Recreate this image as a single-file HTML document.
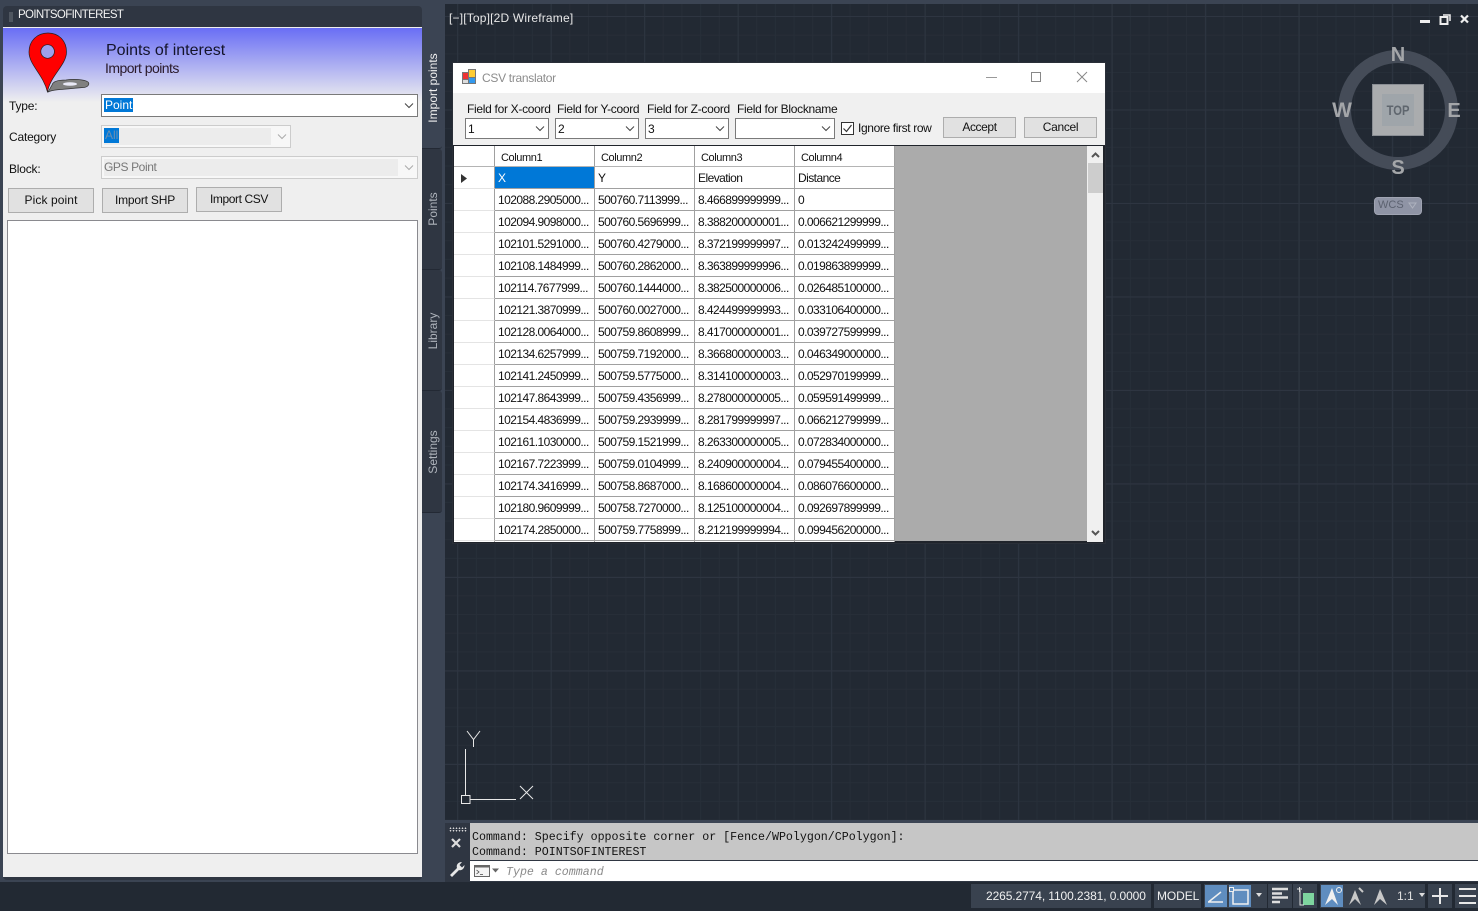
<!DOCTYPE html>
<html><head><meta charset="utf-8"><style>
html,body{margin:0;padding:0;width:1478px;height:911px;overflow:hidden;background:#3b4453;font:12px "Liberation Sans",sans-serif;color:#111}
div,span,table{position:absolute;box-sizing:border-box}
.t{white-space:nowrap;line-height:14px}
svg{position:absolute;overflow:visible}
#vp{left:445px;top:4px;width:1033px;height:816px;background-color:#222933;
background-image:linear-gradient(90deg,#2e3541 1px,transparent 1px),linear-gradient(#2e3541 1px,transparent 1px),linear-gradient(90deg,#272e38 1px,transparent 1px),linear-gradient(#272e38 1px,transparent 1px);
background-size:93.5px 93.5px,93.5px 93.5px,18.7px 18.7px,18.7px 18.7px;background-position:12.2px 12px,0 12px,12.2px 12px,0 12px}
.tab{left:422px;width:20px;background:#2f3642;border-radius:0 3px 3px 0;border-bottom:1px solid #232934}
.vt{color:#aeb3bb;transform:rotate(-90deg);transform-origin:center;white-space:nowrap;width:100px;text-align:center;left:-39px;line-height:14px}
.btn{background:#e1e1e1;border:1px solid #adadad;text-align:center;color:#111}
.cb{background:#fff;border:1px solid #7a7a7a;height:21px;top:118px}
.cmp{color:#a4a6a9;font:bold 20px "Liberation Sans",sans-serif;line-height:22px;width:30px;text-align:center}
.s{top:884px;height:24px;background:#39424f}
.b{top:885px;height:22px;background:#5f8dbf}
.f{letter-spacing:-.3px}
#g{left:0;top:0;width:441px;border-collapse:separate;border-spacing:0;table-layout:fixed;font-size:12px;letter-spacing:-.55px;position:absolute}
#g td{height:22px;padding:0 0 0 3px;border-right:1px solid #a0a0a0;border-bottom:1px solid #a0a0a0;white-space:nowrap;overflow:hidden;background:#fff;color:#111;box-sizing:border-box;line-height:14px}
#g tr.h td{height:21px;padding:3px 0 0 6px;font-size:11px;letter-spacing:-.4px;border-bottom-color:#b4b4b4}
#g td.r{border-right:1px solid #a0a0a0;border-bottom:1px solid #e4e4e4;padding:0;position:relative}
#g td.sel{background:#0078d7;color:#fff}
</style></head><body>
<div id="vp"></div>
<div style="left:0;top:882px;width:1478px;height:29px;background:#222933"></div>

<!-- left palette -->
<div style="left:3px;top:6px;width:419px;height:874px;background:#2f3642;border-radius:4px"></div>
<div style="left:9px;top:12px;width:4px;height:10px;background-image:radial-gradient(#b0b4ba .6px,transparent .7px);background-size:2px 2px"></div>
<div class="t" style="left:18px;top:8px;color:#f2f2f2;font-size:11.5px;letter-spacing:-.65px">POINTSOFINTEREST</div>
<div style="left:3px;top:27px;width:419px;height:850px;background:#efefef"></div>
<div style="left:3px;top:28px;width:419px;height:74px;background:linear-gradient(#696ef5,#efefef)"></div>
<svg style="left:0;top:0" width="100" height="100">
<path d="M48 92L52 85C53 81 60 80 66 80C72 79 84 79 88 82C90 84 88 87 84 87.500C76 88 68 89 60 89.500C56 90 52 90 48 92Z" fill="#808080" stroke="#333" stroke-width=".7"/>
<ellipse cx="70" cy="84" rx="7" ry="1.800" fill="#e8e8f5"/>
<path d="M48 33C37 33 29 41 29 52C29 65 43 74 47.500 92C50 76 66.500 65 66.500 52C66.500 41 59 33 48 33Z" fill="#f00" stroke="#222" stroke-width=".7"/>
<circle cx="47.600" cy="51.500" r="6.800" fill="#9fa0ea" stroke="#222" stroke-width=".7"/>
</svg>
<div class="t" style="left:106px;top:41px;font-size:16px;line-height:19px;color:#14142a">Points of interest</div>
<div class="t" style="left:105px;top:60px;font-size:14px;line-height:16px;color:#2a1a2a;letter-spacing:-.55px">Import points</div>
<div class="t" style="left:9px;top:99px;letter-spacing:-.2px">Type:</div>
<div style="left:101px;top:94px;width:317px;height:23px;background:#fff;border:1px solid #7a7a7a"></div>
<div class="t" style="left:104px;top:98px;width:29px;background:#0078d7;color:#fff;padding-left:1px">Point</div>
<svg style="left:404px;top:102px" width="12" height="8"><path d="M1 1.500L5 5.500L9 1.500" fill="none" stroke="#444"/></svg>
<div class="t" style="left:9px;top:130px;letter-spacing:-.2px">Category</div>
<div style="left:101px;top:125px;width:190px;height:23px;background:#f7f7f7;border:1px solid #ccc"></div>
<div style="left:104px;top:128px;width:167px;height:17px;background:#ececec"></div>
<div class="t" style="left:104px;top:128px;width:15px;height:15px;background:#0078d7;color:#6d8fb0;padding-left:1px">All</div>
<svg style="left:277px;top:133px" width="12" height="8"><path d="M1 1.500L5 5.500L9 1.500" fill="none" stroke="#aaa"/></svg>
<div class="t" style="left:9px;top:162px;letter-spacing:-.2px">Block:</div>
<div style="left:101px;top:156px;width:317px;height:23px;background:#f7f7f7;border:1px solid #ccc"></div>
<div style="left:104px;top:159px;width:294px;height:17px;background:#ececec"></div>
<div class="t" style="left:104px;top:160px;color:#777;letter-spacing:-.4px">GPS Point</div>
<svg style="left:404px;top:164px" width="12" height="8"><path d="M1 1.500L5 5.500L9 1.500" fill="none" stroke="#aaa"/></svg>
<div class="btn t" style="left:8px;top:188px;width:86px;height:25px;line-height:23px;letter-spacing:.1px">Pick point</div>
<div class="btn t" style="left:102px;top:188px;width:86px;height:25px;line-height:23px;letter-spacing:-.2px">Import SHP</div>
<div class="btn t" style="left:196px;top:187px;width:86px;height:25px;line-height:23px;letter-spacing:-.4px">Import CSV</div>
<div style="left:7px;top:220px;width:411px;height:634px;background:#fff;border:1px solid #8a8a8f"></div>

<!-- tabs -->
<div class="tab" style="top:28px;height:121px;background:#3b4453"><div class="vt" style="top:53px;color:#f0f0f0">Import points</div></div>
<div class="tab" style="top:149px;height:121px"><div class="vt" style="top:53px">Points</div></div>
<div class="tab" style="top:270px;height:121px"><div class="vt" style="top:54px">Library</div></div>
<div class="tab" style="top:391px;height:122px"><div class="vt" style="top:54px">Settings</div></div>

<!-- viewport overlays -->
<div class="t" style="left:449px;top:11px;color:#e8e8e8;letter-spacing:.18px">[−][Top][2D Wireframe]</div>
<svg style="left:1415px;top:12px" width="60" height="14">
<rect x="5" y="8" width="10" height="3" fill="#eee"/>
<rect x="25.500" y="5" width="7" height="7" fill="none" stroke="#eee" stroke-width="2"/>
<path d="M28 3H35V9" fill="none" stroke="#eee" stroke-width="1.500"/>
<path d="M46 3.500L53 10.500M53 3.500L46 10.500" stroke="#eee" stroke-width="2.200"/>
</svg>
<svg style="left:1330px;top:42px" width="136" height="136"><circle cx="68" cy="68" r="53.500" fill="none" stroke="#454c58" stroke-width="13"/></svg>
<div style="left:1372px;top:84px;width:52px;height:52px;background:#aaacae;border:1px solid #8a8e94"></div>
<div style="left:1382px;top:94px;width:32px;height:32px;background:#9fa5aa"></div>
<div class="t" style="left:1382px;top:102px;width:32px;text-align:center;font-weight:bold;font-size:14px;color:#5f666e;transform:scaleX(.8);line-height:16px">TOP</div>
<div class="cmp" style="left:1383px;top:44px">N</div>
<div class="cmp" style="left:1327px;top:100px;font-size:21px">W</div>
<div class="cmp" style="left:1439px;top:100px">E</div>
<div class="cmp" style="left:1383px;top:157px">S</div>
<div style="left:1374px;top:197px;width:48px;height:18px;background:#8f94a5;border:1px solid #a0a4b2;border-radius:4px"></div>
<div class="t" style="left:1378px;top:198px;color:#5c6270;font-size:11px">WCS</div>
<svg style="left:1408px;top:202px" width="10" height="8"><path d="M1 1H8L4.500 6Z" fill="none" stroke="#aeb2be"/></svg>

<svg style="left:455px;top:725px" width="80" height="85">
<path d="M10.500 24V70M15 74.500H61" stroke="#e8e8e8" fill="none"/>
<rect x="6.500" y="70.500" width="8.500" height="8" fill="none" stroke="#e8e8e8"/>
<path d="M12 6L18.500 14.500L25 6M18.500 14.500V22" stroke="#e8e8e8" fill="none"/>
<path d="M65 61L78 74M78 61L65 74" stroke="#e8e8e8" fill="none"/>
</svg>

<!-- dialog -->
<div style="left:453px;top:63px;width:652px;height:480px;background:#f0f0f0;box-shadow:0 0 0 1px #2a2f38"></div>
<div style="left:453px;top:63px;width:652px;height:30px;background:#fff"></div>
<svg style="left:462px;top:69px" width="16" height="16">
<rect x="0.500" y="3.500" width="6" height="7" fill="#e33" stroke="#777"/><rect x="6.500" y="0.500" width="7" height="8" fill="#fc3" stroke="#777"/><rect x="6.500" y="8.500" width="7" height="6" fill="#39e" stroke="#777"/><rect x="0.500" y="10.500" width="6" height="4" fill="#ddd" stroke="#777"/>
</svg>
<div class="t f" style="left:482px;top:71px;color:#8c8c8c">CSV translator</div>
<svg style="left:980px;top:68px" width="115" height="18">
<path d="M6 9.500H17" stroke="#999"/><rect x="51.500" y="4.500" width="9" height="9" fill="none" stroke="#888"/><path d="M97 4L107 14M107 4L97 14" stroke="#888"/>
</svg>
<div class="t f" style="left:467px;top:102px">Field for X-coord</div>
<div class="t f" style="left:557px;top:102px">Field for Y-coord</div>
<div class="t f" style="left:647px;top:102px">Field for Z-coord</div>
<div class="t f" style="left:737px;top:102px">Field for Blockname</div>
<div class="cb t" style="left:465px;width:84px;padding:3px 0 0 2px">1</div>
<div class="cb t" style="left:555px;width:84px;padding:3px 0 0 2px">2</div>
<div class="cb t" style="left:645px;width:84px;padding:3px 0 0 2px">3</div>
<div class="cb" style="left:735px;width:100px"></div>
<svg style="left:535px;top:125px" width="300" height="8" fill="none" stroke="#444"><path d="M1 1.500L5 5.500L9 1.500M91 1.500L95 5.500L99 1.500M181 1.500L185 5.500L189 1.500M287 1.500L291 5.500L295 1.500"/></svg>
<svg style="left:841px;top:122px" width="14" height="13"><rect x="0.500" y="0.500" width="12" height="12" fill="#fff" stroke="#333"/><path d="M2.500 6.500L5.500 9.500L10.500 3" fill="none" stroke="#333" stroke-width="1.200"/></svg>
<div class="t" style="left:858px;top:121px;letter-spacing:-.37px">Ignore first row</div>
<div class="btn t" style="left:943px;top:117px;width:73px;height:21px;line-height:19px;letter-spacing:-.4px">Accept</div>
<div class="btn t" style="left:1024px;top:117px;width:73px;height:21px;line-height:19px;letter-spacing:-.3px">Cancel</div>

<div style="left:453px;top:145px;width:652px;height:398px;background:#ababab;border:solid #20242b;border-width:1px 2px 2px 1px"></div>
<div style="left:454px;top:146px;width:441px;height:396px;overflow:hidden">
<table id="g">
<colgroup><col style="width:41px"><col style="width:100px"><col style="width:100px"><col style="width:100px"><col style="width:100px"></colgroup>
<tr class="h"><td class="r" style="border-bottom-color:#b4b4b4"></td><td>Column1</td><td>Column2</td><td>Column3</td><td>Column4</td></tr>
<tr><td class="r"><svg style="left:7px;top:7px" width="6" height="9"><path d="M0 0L6 4.500L0 9Z" fill="#333"/></svg></td><td class="sel">X</td><td>Y</td><td>Elevation</td><td>Distance</td></tr>
<tr><td class="r"></td><td>102088.2905000...</td><td>500760.7113999...</td><td>8.466899999999...</td><td>0</td></tr>
<tr><td class="r"></td><td>102094.9098000...</td><td>500760.5696999...</td><td>8.388200000001...</td><td>0.006621299999...</td></tr>
<tr><td class="r"></td><td>102101.5291000...</td><td>500760.4279000...</td><td>8.372199999997...</td><td>0.013242499999...</td></tr>
<tr><td class="r"></td><td>102108.1484999...</td><td>500760.2862000...</td><td>8.363899999996...</td><td>0.019863899999...</td></tr>
<tr><td class="r"></td><td>102114.7677999...</td><td>500760.1444000...</td><td>8.382500000006...</td><td>0.026485100000...</td></tr>
<tr><td class="r"></td><td>102121.3870999...</td><td>500760.0027000...</td><td>8.424499999993...</td><td>0.033106400000...</td></tr>
<tr><td class="r"></td><td>102128.0064000...</td><td>500759.8608999...</td><td>8.417000000001...</td><td>0.039727599999...</td></tr>
<tr><td class="r"></td><td>102134.6257999...</td><td>500759.7192000...</td><td>8.366800000003...</td><td>0.046349000000...</td></tr>
<tr><td class="r"></td><td>102141.2450999...</td><td>500759.5775000...</td><td>8.314100000003...</td><td>0.052970199999...</td></tr>
<tr><td class="r"></td><td>102147.8643999...</td><td>500759.4356999...</td><td>8.278000000005...</td><td>0.059591499999...</td></tr>
<tr><td class="r"></td><td>102154.4836999...</td><td>500759.2939999...</td><td>8.281799999997...</td><td>0.066212799999...</td></tr>
<tr><td class="r"></td><td>102161.1030000...</td><td>500759.1521999...</td><td>8.263300000005...</td><td>0.072834000000...</td></tr>
<tr><td class="r"></td><td>102167.7223999...</td><td>500759.0104999...</td><td>8.240900000004...</td><td>0.079455400000...</td></tr>
<tr><td class="r"></td><td>102174.3416999...</td><td>500758.8687000...</td><td>8.168600000004...</td><td>0.086076600000...</td></tr>
<tr><td class="r"></td><td>102180.9609999...</td><td>500758.7270000...</td><td>8.125100000004...</td><td>0.092697899999...</td></tr>
<tr><td class="r"></td><td>102174.2850000...</td><td>500759.7758999...</td><td>8.212199999994...</td><td>0.099456200000...</td></tr>
<tr><td class="r"></td><td></td><td></td><td></td><td></td></tr>
</table>
</div>
<div style="left:1087px;top:146px;width:16px;height:396px;background:#f0f0f0"></div>
<div style="left:1088px;top:163px;width:15px;height:30px;background:#cdcdcd"></div>
<svg style="left:1087px;top:148px" width="16" height="394" fill="none" stroke="#555" stroke-width="2"><path d="M5 9L8.500 5.500L12 9M5 383L8.500 386.500L12 383"/></svg>

<!-- command line -->
<div style="left:445px;top:823px;width:1033px;height:59px;background:#2f3642"></div>
<div style="left:470px;top:823px;width:1008px;height:37px;background:#c6c6c6"></div>
<div style="left:470px;top:861px;width:1008px;height:20px;background:#fff"></div>
<div style="left:449px;top:827px;width:18px;height:5px;background-image:radial-gradient(#d8d8d8 .8px,transparent .9px);background-size:3px 2.500px"></div>
<svg style="left:448px;top:835px" width="20" height="45">
<path d="M4 4L12 12M12 4L4 12" stroke="#ddd" stroke-width="2.200"/>
<path d="M2 40L9 33C8 30 10 27 14 27L11.500 30L14 32.500L16.500 30C16.500 34 13 36 11 35L4 42Z" fill="#e8e8e8"/>
</svg>
<div class="t" style="left:472px;top:831px;font:11.64px/14px 'Liberation Mono',monospace;color:#111">Command: Specify opposite corner or [Fence/WPolygon/CPolygon]:</div>
<div class="t" style="left:472px;top:846px;font:11.64px/14px 'Liberation Mono',monospace;color:#111">Command: POINTSOFINTEREST</div>
<svg style="left:474px;top:865px" width="28" height="13">
<rect x="0.500" y="0.500" width="15" height="11" fill="#f4f4f4" stroke="#666"/><rect x="0.500" y="0.500" width="15" height="2" fill="#666"/><path d="M2.500 5L5 7L2.500 9M6 9.500H9" fill="none" stroke="#444" stroke-width=".8"/>
<path d="M18 3.500H25L21.500 7.500Z" fill="#666"/>
</svg>
<div class="t" style="left:506px;top:866px;font:italic 11.64px/14px 'Liberation Mono',monospace;color:#8a8a8a">Type a command</div>

<!-- status bar -->
<div class="s" style="left:971px;width:180px"></div>
<div class="t" style="left:986px;top:889px;color:#f0f0f0;letter-spacing:-.1px">2265.2774, 1100.2381, 0.0000</div>
<div class="s" style="left:1154px;width:47px"></div>
<div class="t" style="left:1157px;top:889px;color:#f0f0f0;letter-spacing:-.1px">MODEL</div>
<div class="s" style="left:1204px;width:63px"></div>
<div class="b" style="left:1205px;width:22px"></div>
<div class="b" style="left:1229px;width:22px"></div>
<div class="s" style="left:1268px;width:24px"></div>
<div class="s" style="left:1293px;width:24px"></div>
<div class="s" style="left:1320px;width:105px"></div>
<div class="b" style="left:1321px;width:22px"></div>
<div class="s" style="left:1428px;width:24px"></div>
<div class="s" style="left:1455px;width:23px"></div>
<svg style="left:1200px;top:884px" width="278" height="24" fill="none" stroke="#f0f0f0">
<path d="M8 18H23M8.500 18L21 8" stroke-width="1.500"/>
<rect x="33" y="6" width="15" height="14" stroke-width="1.500"/><rect x="29.500" y="3.500" width="4" height="4" fill="#5f8dbf"/>
<path d="M56 9H62L59 13Z" fill="#ddd" stroke="none"/>
<path d="M72 5H88M72 9.500H82M72 13.500H88M72 18H80" stroke="#ddd" stroke-width="2.500"/>
<path d="M97 5H102M99.500 3V8" stroke="#ddd"/><rect x="103" y="9" width="11" height="12" fill="#7ed59f" stroke="none"/><path d="M100 6V21H104" stroke="#ddd"/>
<path d="M125 21L132 4L138 21L132 15Z" fill="#f0f0f0" stroke="none"/><circle cx="139" cy="6" r="2.500"/>
<path d="M149 21L155 6L161 21L155 15Z" fill="#c8c8c8" stroke="none"/><path d="M159 4L163 8" stroke="#c8c8c8" stroke-width="2"/>
<path d="M174 21L180 5L187 21L180 15Z" fill="#c8c8c8" stroke="none"/>
<path d="M219 9H225L222 13Z" fill="#ddd" stroke="none"/>
<path d="M240 4V20M232 12H248" stroke="#e8e8e8" stroke-width="2"/>
<path d="M259 5H276M259 12H276M259 19H276" stroke="#e8e8e8" stroke-width="2"/>
</svg>
<div class="t" style="left:1397px;top:889px;color:#e0e0e0">1:1</div>
</body></html>
